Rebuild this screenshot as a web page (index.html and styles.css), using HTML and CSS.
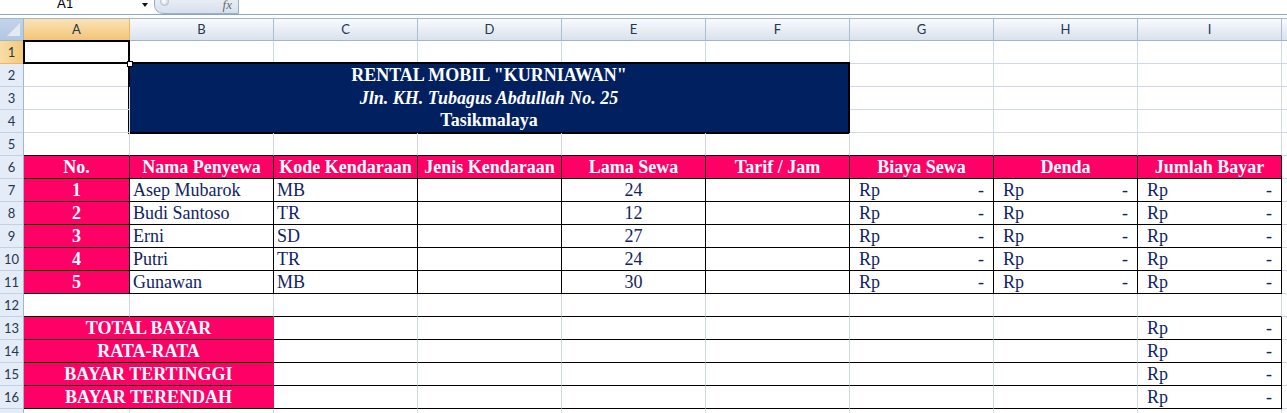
FILE: index.html
```html
<!DOCTYPE html>
<html lang="id">
<head>
<meta charset="utf-8">
<title>Rental Mobil Kurniawan</title>
<link rel="stylesheet" href="styles.css">
</head>
<body>
<div class="app">
  <div class="fbar">
    <div class="namebox">A1</div>
    <div class="drop"></div>
    <div class="fxbtn"><span class="knob"></span><span class="fx">fx</span></div>
  </div>
  <div class="gap"></div>
  <div class="sheet">
    <!-- column headers -->
    <div class="corner"><svg width="23" height="21" viewBox="0 0 23 21"><polygon points="20,4 20,17 7,17" fill="#e3e9f1"/></svg></div>
    <div class="ch sel">A</div>
    <div class="ch">B</div>
    <div class="ch">C</div>
    <div class="ch">D</div>
    <div class="ch">E</div>
    <div class="ch">F</div>
    <div class="ch">G</div>
    <div class="ch">H</div>
    <div class="ch">I</div>
    <div class="ch"></div>

    <!-- row 1 -->
    <div class="rh sel">1</div>
    <div class="c a1"></div>
    <div class="c"></div><div class="c"></div><div class="c"></div><div class="c"></div><div class="c"></div><div class="c"></div><div class="c"></div><div class="c"></div>
    <div class="c"></div>

    <!-- rows 2-4 -->
    <div class="rh">2</div>
    <div class="c"></div>
    <div class="title">
      <div class="t1">RENTAL MOBIL "KURNIAWAN"</div>
      <div class="t2">Jln. KH. Tubagus Abdullah No. 25</div>
      <div class="t3">Tasikmalaya</div>
    </div>
    <div class="c"></div><div class="c"></div><div class="c"></div><div class="c"></div>
    <div class="rh">3</div>
    <div class="c"></div>
    <div class="c"></div><div class="c"></div><div class="c"></div><div class="c"></div>
    <div class="rh">4</div>
    <div class="c"></div>
    <div class="c"></div><div class="c"></div><div class="c"></div><div class="c"></div>

    <!-- row 5 -->
    <div class="rh">5</div>
    <div class="c bb"></div><div class="c bb"></div><div class="c bb"></div><div class="c bb"></div><div class="c bb"></div><div class="c bb"></div><div class="c bb"></div><div class="c bb"></div><div class="c bb"></div>
    <div class="c"></div>

    <!-- row 6 header -->
    <div class="rh">6</div>
    <div class="c hd">No.</div>
    <div class="c hd">Nama Penyewa</div>
    <div class="c hd">Kode Kendaraan</div>
    <div class="c hd">Jenis Kendaraan</div>
    <div class="c hd">Lama Sewa</div>
    <div class="c hd">Tarif / Jam</div>
    <div class="c hd">Biaya Sewa</div>
    <div class="c hd">Denda</div>
    <div class="c hd">Jumlah Bayar</div>
    <div class="c"></div>

    <!-- row 7 -->
    <div class="rh">7</div>
    <div class="c no">1</div>
    <div class="c bd">Asep Mubarok</div>
    <div class="c bd">MB</div>
    <div class="c bd"></div>
    <div class="c bd ctr">24</div>
    <div class="c bd"></div>
    <div class="c bd rp"><span>Rp</span><span>-</span></div>
    <div class="c bd rp"><span>Rp</span><span>-</span></div>
    <div class="c bd rp"><span>Rp</span><span>-</span></div>
    <div class="c"></div>

    <!-- row 8 -->
    <div class="rh">8</div>
    <div class="c no">2</div>
    <div class="c bd">Budi Santoso</div>
    <div class="c bd">TR</div>
    <div class="c bd"></div>
    <div class="c bd ctr">12</div>
    <div class="c bd"></div>
    <div class="c bd rp"><span>Rp</span><span>-</span></div>
    <div class="c bd rp"><span>Rp</span><span>-</span></div>
    <div class="c bd rp"><span>Rp</span><span>-</span></div>
    <div class="c"></div>

    <!-- row 9 -->
    <div class="rh">9</div>
    <div class="c no">3</div>
    <div class="c bd">Erni</div>
    <div class="c bd">SD</div>
    <div class="c bd"></div>
    <div class="c bd ctr">27</div>
    <div class="c bd"></div>
    <div class="c bd rp"><span>Rp</span><span>-</span></div>
    <div class="c bd rp"><span>Rp</span><span>-</span></div>
    <div class="c bd rp"><span>Rp</span><span>-</span></div>
    <div class="c"></div>

    <!-- row 10 -->
    <div class="rh">10</div>
    <div class="c no">4</div>
    <div class="c bd">Putri</div>
    <div class="c bd">TR</div>
    <div class="c bd"></div>
    <div class="c bd ctr">24</div>
    <div class="c bd"></div>
    <div class="c bd rp"><span>Rp</span><span>-</span></div>
    <div class="c bd rp"><span>Rp</span><span>-</span></div>
    <div class="c bd rp"><span>Rp</span><span>-</span></div>
    <div class="c"></div>

    <!-- row 11 -->
    <div class="rh">11</div>
    <div class="c no">5</div>
    <div class="c bd">Gunawan</div>
    <div class="c bd">MB</div>
    <div class="c bd"></div>
    <div class="c bd ctr">30</div>
    <div class="c bd"></div>
    <div class="c bd rp"><span>Rp</span><span>-</span></div>
    <div class="c bd rp"><span>Rp</span><span>-</span></div>
    <div class="c bd rp"><span>Rp</span><span>-</span></div>
    <div class="c"></div>

    <!-- row 12 -->
    <div class="rh">12</div>
    <div class="c bb"></div><div class="c bb"></div><div class="c bb"></div><div class="c bb"></div><div class="c bb"></div><div class="c bb"></div><div class="c bb"></div><div class="c bb"></div><div class="c bb"></div>
    <div class="c"></div>

    <!-- row 13 -->
    <div class="rh">13</div>
    <div class="c lbl">TOTAL BAYAR</div>
    <div class="c bb"></div><div class="c bb"></div><div class="c bb"></div><div class="c bb"></div><div class="c bb"></div><div class="c bb"></div>
    <div class="c bd rp"><span>Rp</span><span>-</span></div>
    <div class="c"></div>

    <!-- row 14 -->
    <div class="rh">14</div>
    <div class="c lbl">RATA-RATA</div>
    <div class="c bb"></div><div class="c bb"></div><div class="c bb"></div><div class="c bb"></div><div class="c bb"></div><div class="c bb"></div>
    <div class="c bd rp"><span>Rp</span><span>-</span></div>
    <div class="c"></div>

    <!-- row 15 -->
    <div class="rh">15</div>
    <div class="c lbl">BAYAR TERTINGGI</div>
    <div class="c bb"></div><div class="c bb"></div><div class="c bb"></div><div class="c bb"></div><div class="c bb"></div><div class="c bb"></div>
    <div class="c bd rp"><span>Rp</span><span>-</span></div>
    <div class="c"></div>

    <!-- row 16 -->
    <div class="rh">16</div>
    <div class="c lbl">BAYAR TERENDAH</div>
    <div class="c bb"></div><div class="c bb"></div><div class="c bb"></div><div class="c bb"></div><div class="c bb"></div><div class="c bb"></div>
    <div class="c bd rp"><span>Rp</span><span>-</span></div>
    <div class="c"></div>

    <!-- row 17 -->
    <div class="rh">17</div>
    <div class="c"></div><div class="c"></div><div class="c"></div><div class="c"></div><div class="c"></div><div class="c"></div><div class="c"></div><div class="c"></div><div class="c"></div>
    <div class="c"></div>
  </div>
</div>
</body>
</html>
```
FILE: styles.css
```css
html, body {
  margin: 0;
  padding: 0;
  background: #ffffff;
}
body {
  width: 1287px;
  height: 413px;
  overflow: hidden;
  font-family: "Liberation Serif", "Times New Roman", serif;
}
.app {
  width: 1287px;
  overflow: hidden;
}

/* formula bar strip */
.fbar {
  height: 15px;
  box-sizing: border-box;
  border-bottom: 1px solid #8ca6c6;
  display: flex;
  align-items: flex-start;
  overflow: hidden;
}
.namebox {
  width: 142px;
  box-sizing: border-box;
  padding-left: 57px;
  margin-top: -4px;
  font: 13px/15px Lato, "Liberation Sans", sans-serif;
  color: #000;
}
.drop {
  width: 0;
  height: 0;
  margin-top: 3px;
  border-left: 3px solid transparent;
  border-right: 3px solid transparent;
  border-top: 4px solid #111;
}
.fxbtn {
  width: 85px;
  height: 22px;
  box-sizing: border-box;
  margin-top: -8px;
  margin-left: 6px;
  border: 1px solid #98aecb;
  border-radius: 0 0 0 9px;
  background: linear-gradient(#f1f4f9, #d6e0ec);
  display: flex;
  align-items: flex-start;
}
.knob {
  width: 9px;
  height: 9px;
  box-sizing: border-box;
  margin: 4px 0 0 5px;
  border: 1px solid #b2bdcb;
  border-radius: 50%;
  background: radial-gradient(circle at 40% 40%, #ffffff, #c9d2dd);
}
.fx {
  margin: 4px 6px 0 auto;
  font: italic 13px/15px "Liberation Serif", serif;
  color: #6b6b6b;
}
.gap {
  height: 3px;
}

/* sheet grid */
.sheet {
  display: grid;
  grid-template-columns: 24px 106px repeat(9, 144px);
  grid-auto-rows: 23px;
  width: 1287px;
  overflow: hidden;
}
.corner {
  box-sizing: border-box;
  border-top: 1px solid #9eb6ce;
  border-bottom: 1px solid #9eb6ce;
  border-right: 1px solid #9eb6ce;
  background: linear-gradient(#c3d4ea, #b2c7e2);
  line-height: 0;
}
.ch {
  box-sizing: border-box;
  border-top: 1px solid #9eb6ce;
  border-bottom: 1px solid #9eb6ce;
  border-right: 1px solid #a9bdd4;
  background: linear-gradient(#f8fafd, #dae2ed);
  font: 13px/21px Lato, "Liberation Sans", sans-serif;
  color: #26364c;
  text-align: center;
}
.ch.sel {
  background: linear-gradient(#fae3b6, #f2c576);
  border-right-color: #eeb45e;
}
.rh {
  box-sizing: border-box;
  border-right: 1px solid #9eb6ce;
  border-bottom: 1px solid #c3d1e3;
  background: #e4ecf7;
  font: 13px/22px Lato, "Liberation Sans", sans-serif;
  color: #26364c;
  text-align: center;
}
.rh.sel {
  background: linear-gradient(90deg, #f9dda6, #f4c878);
  border-bottom-color: #ecb664;
  border-right-color: #eeb45e;
}

.c {
  box-sizing: border-box;
  border-right: 1px solid #d0d7e5;
  border-bottom: 1px solid #d0d7e5;
  padding: 0 3px;
  font-size: 18px;
  line-height: 22px;
  color: #0f2462;
  white-space: nowrap;
  overflow: hidden;
}
.bb { border-bottom-color: #000; }
.bd { border-right-color: #000; border-bottom-color: #000; }
.ctr { text-align: center; }
.hd {
  background: #ff0066;
  color: #ffffff;
  font-weight: bold;
  text-align: center;
  border-right-color: #000;
  border-bottom-color: #000;
}
.no {
  background: #ff0066;
  color: #ffffff;
  font-weight: bold;
  text-align: center;
  border-right-color: #000;
  border-bottom-color: #000;
}
.lbl {
  grid-column: span 2;
  background: #ff0066;
  color: #ffffff;
  font-weight: bold;
  text-align: center;
  border-right-color: #ff0066;
  border-bottom-color: #000;
}
.rp {
  display: flex;
  justify-content: space-between;
  padding: 0 9px 0 9px;
}

/* selected cell A1 */
.a1 {
  position: relative;
  overflow: visible;
  z-index: 2;
}
.a1::before {
  content: "";
  position: absolute;
  left: -1px;
  top: -1px;
  width: 107px;
  height: 24px;
  box-sizing: border-box;
  border: 2px solid #000;
}
.a1::after {
  content: "";
  position: absolute;
  left: 103px;
  top: 20px;
  width: 6px;
  height: 6px;
  box-sizing: border-box;
  border: 1px solid #000;
  background: #fff;
}

/* merged title B2:F4 */
.title {
  grid-column: span 5;
  grid-row: span 3;
  margin: -2px 0 -1px -2px;
  box-sizing: border-box;
  border: 2px solid #000;
  background: #002060;
  color: #ffffff;
  font-weight: bold;
  font-size: 18px;
  line-height: 22.5px;
  text-align: center;
  display: flex;
  flex-direction: column;
  white-space: nowrap;
}
.t2 { font-style: italic; }
```
